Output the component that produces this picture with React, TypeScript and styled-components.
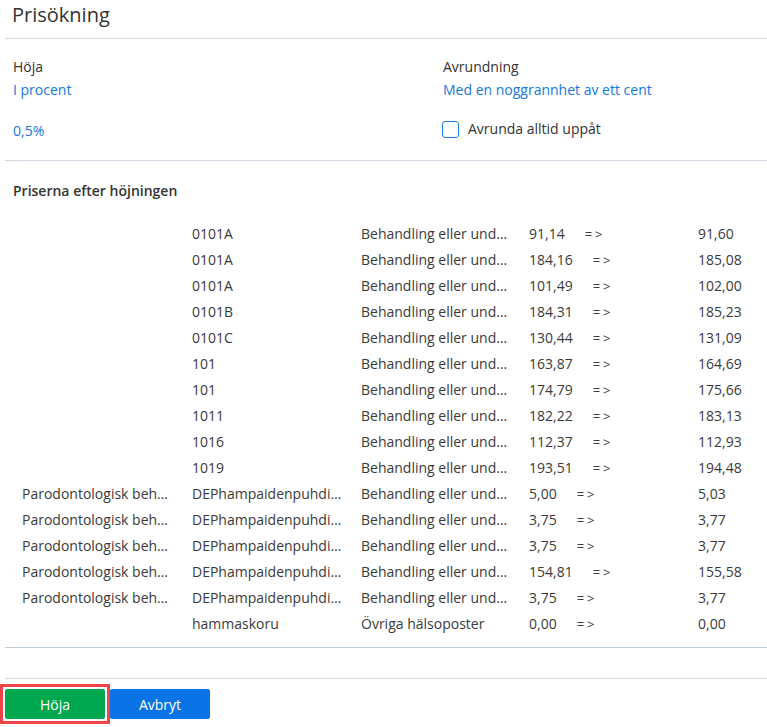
import React from "react";
import styled, { createGlobalStyle } from "styled-components";

const GlobalStyle = createGlobalStyle`
  body {
    margin: 0;
    background: #fff;
    font-family: "Open Sans", "Noto Sans", Arial, sans-serif;
    font-size: 14px;
    color: #333;
  }
`

const Dialog = styled.div`
  width: 767px;
  height: 727px;
  overflow: hidden;
  padding-left: 5px;
  box-sizing: border-box;
`
const Header = styled.div`
  height: 38px;
  border-bottom: 1px solid #cfd8e3;
`
const Title = styled.h1`
  margin: 0;
  padding-left: 7px;
  font-size: 20px;
  font-weight: 400;
  line-height: 30px;
  color: #333;
`
const Settings = styled.div`
  display: grid;
  grid-template-columns: 430px 1fr;
  padding: 17px 8px 18px;
  border-bottom: 1px solid #cfd8e3;
`
const Column = styled.div`
  display: flex;
  flex-direction: column;
`
const Label = styled.div`
  line-height: 22px;
  color: #333;
`
const LinkText = styled.a<{ $spaced?: boolean }>`
  line-height: 22px;
  color: #1379e0;
  text-decoration: none;
  margin-top: ${(p) => (p.$spaced ? "19px" : "1px")};
  cursor: pointer;
`
const CheckRow = styled.label`
  display: flex;
  align-items: center;
  gap: 9px;
  margin-top: 17px;
  line-height: 22px;
`
const Box = styled.span`
  width: 17px;
  height: 17px;
  box-sizing: border-box;
  border: 1.5px solid #1a7fe6;
  border-radius: 3px;
  margin-left: -1px;
`
const Results = styled.div`
  padding: 20px 0 10px;
  border-bottom: 1px solid #bfcedb;
`
const Heading = styled.div`
  padding-left: 8px;
  font-weight: 600;
  line-height: 20px;
  margin-bottom: 20px;
  color: #333;
`
const Row = styled.div`
  display: grid;
  grid-template-columns: 170px 169px 168px 169px 1fr;
  padding-left: 17px;
  height: 26px;
  line-height: 26px;
  color: #3a3a3a;
`
const Cell = styled.div`
  white-space: nowrap;
`
const Change = styled.div`
  display: flex;
  gap: 20px;
  white-space: nowrap;
`
const Arrow = styled.span`
  letter-spacing: 3px;
  font-size: 13px;
`
const Spacer = styled.div`
  height: 30px;
  border-bottom: 1px solid #cfd8e3;
`
const Footer = styled.div`
  display: flex;
  align-items: flex-start;
  gap: 5px;
  padding-top: 10px;
`
const FocusRing = styled.span`
  display: inline-flex;
  padding: 2px;
  margin: -5px -5px 0 -5px;
  border: 3px solid #f04446;
`
const Button = styled.button<{ $variant: "ok" | "cancel" }>`
  width: 100px;
  height: 30px;
  border: none;
  border-radius: 2px;
  font-family: inherit;
  font-size: 14px;
  color: #fff;
  background: ${(p) => (p.$variant === "ok" ? "#00a84f" : "#0a73e6")};
  outline: none;
  cursor: pointer;
`

interface IPriceRow {
  group: string;
  code: string;
  name: string;
  before: string;
  after: string;
}

const BEH = "Behandling eller und…";
const PARO = "Parodontologisk beh…";
const DEP = "DEPhampaidenpuhdi…";

const rows: IPriceRow[] = [
  { group: "", code: "0101A", name: BEH, before: "91,14", after: "91,60" },
  { group: "", code: "0101A", name: BEH, before: "184,16", after: "185,08" },
  { group: "", code: "0101A", name: BEH, before: "101,49", after: "102,00" },
  { group: "", code: "0101B", name: BEH, before: "184,31", after: "185,23" },
  { group: "", code: "0101C", name: BEH, before: "130,44", after: "131,09" },
  { group: "", code: "101", name: BEH, before: "163,87", after: "164,69" },
  { group: "", code: "101", name: BEH, before: "174,79", after: "175,66" },
  { group: "", code: "1011", name: BEH, before: "182,22", after: "183,13" },
  { group: "", code: "1016", name: BEH, before: "112,37", after: "112,93" },
  { group: "", code: "1019", name: BEH, before: "193,51", after: "194,48" },
  { group: PARO, code: DEP, name: BEH, before: "5,00", after: "5,03" },
  { group: PARO, code: DEP, name: BEH, before: "3,75", after: "3,77" },
  { group: PARO, code: DEP, name: BEH, before: "3,75", after: "3,77" },
  { group: PARO, code: DEP, name: BEH, before: "154,81", after: "155,58" },
  { group: PARO, code: DEP, name: BEH, before: "3,75", after: "3,77" },
  { group: "", code: "hammaskoru", name: "Övriga hälsoposter", before: "0,00", after: "0,00" },
];

const App: React.FC = () => {
  return (
    <>
      <GlobalStyle />
      <Dialog>
        <Header>
          <Title>Prisökning</Title>
        </Header>
        <Settings>
          <Column>
            <Label>Höja</Label>
            <LinkText>I procent</LinkText>
            <LinkText $spaced>0,5%</LinkText>
          </Column>
          <Column>
            <Label>Avrundning</Label>
            <LinkText>Med en noggrannhet av ett cent</LinkText>
            <CheckRow>
              <Box />
              Avrunda alltid uppåt
            </CheckRow>
          </Column>
        </Settings>
        <Results>
          <Heading>Priserna efter höjningen</Heading>
          {rows.map((r, i) => (
            <Row key={i}>
              <Cell>{r.group}</Cell>
              <Cell>{r.code}</Cell>
              <Cell>{r.name}</Cell>
              <Change>
                <span>{r.before}</span>
                <Arrow>=&gt;</Arrow>
              </Change>
              <Cell>{r.after}</Cell>
            </Row>
          ))}
        </Results>
        <Spacer />
        <Footer>
          <FocusRing>
            <Button $variant="ok">Höja</Button>
          </FocusRing>
          <Button $variant="cancel">Avbryt</Button>
        </Footer>
      </Dialog>
    </>
  );
};

export default App;
